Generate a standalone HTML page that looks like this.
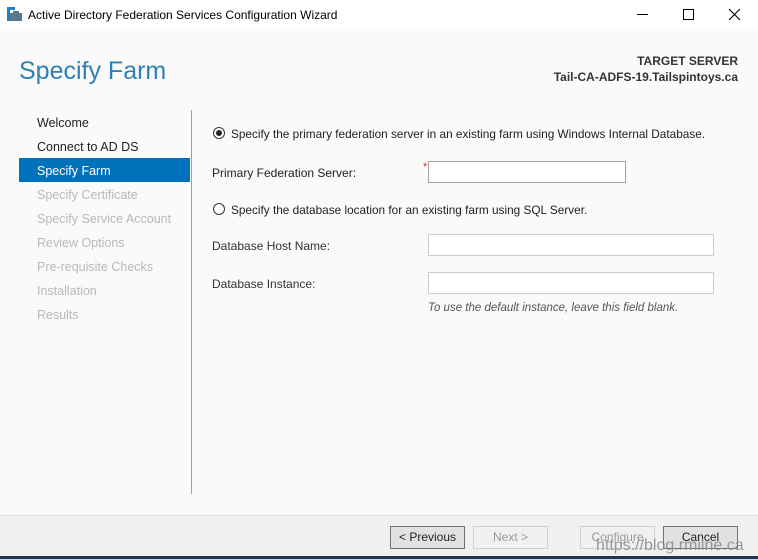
<!DOCTYPE html>
<html><head><style>
*{margin:0;padding:0;box-sizing:border-box}
body{width:758px;height:559px;background:#fafafa;font-family:"Liberation Sans",sans-serif;font-size:12px;color:#1e1e1e;position:relative;overflow:hidden}
.a{position:absolute;white-space:nowrap}
.tb{position:absolute;left:0;top:0;width:758px;height:29px;background:#fff}
.inp{position:absolute;height:22px;background:#fff;border:1px solid #a0a0a0}
.btn{position:absolute;top:526px;width:75px;height:23px;border:1px solid #adadad;background:#e1e1e1;text-align:center;line-height:21px;font-size:12px}
.dis{border-color:#cfcfcf;background:#f0f0f0;color:#9a9a9a}
.nav{position:absolute;left:37px;font-size:12.5px}
.g{color:#b8b8b8}
.r{position:absolute;width:12px;height:12px;border:1px solid #333;border-radius:50%;background:#fff}
</style></head><body>
<div class="tb"></div>
<svg class="a" style="left:7px;top:7px" width="16" height="15"><rect x="0" y="0" width="3" height="14" fill="#1a7fd0"/><rect x="0" y="0" width="8" height="3" fill="#1a7fd0"/><rect x="3" y="6" width="12" height="8" fill="#5a7790"/><rect x="6" y="4" width="6" height="2" fill="#5a7790"/></svg>
<div class="a" style="left:28px;top:8px;font-size:12px;color:#000">Active Directory Federation Services Configuration Wizard</div>
<div class="a" style="left:637px;top:14px;width:11px;height:1px;background:#000"></div>
<div class="a" style="left:683px;top:9px;width:11px;height:11px;border:1px solid #000"></div>
<svg class="a" style="left:728px;top:8px" width="13" height="13"><path d="M1 1L12 12M12 1L1 12" stroke="#000" stroke-width="1.1"/></svg>
<div class="a" style="left:19px;top:57px;font-size:25px;color:#2f7fb5">Specify Farm</div>
<div class="a" style="right:20px;top:54px;font-size:12px;font-weight:bold;color:#333">TARGET SERVER</div>
<div class="a" style="right:20px;top:70px;font-size:12px;font-weight:bold;color:#333">Tail-CA-ADFS-19.Tailspintoys.ca</div>
<div class="nav a" style="top:116px">Welcome</div>
<div class="nav a" style="top:140px">Connect to AD DS</div>
<div class="a" style="left:19px;top:158px;width:171px;height:24px;background:#0072bc"></div>
<div class="nav a" style="top:164px;color:#fff">Specify Farm</div>
<div class="nav a g" style="top:188px">Specify Certificate</div>
<div class="nav a g" style="top:212px">Specify Service Account</div>
<div class="nav a g" style="top:236px">Review Options</div>
<div class="nav a g" style="top:260px">Pre-requisite Checks</div>
<div class="nav a g" style="top:284px">Installation</div>
<div class="nav a g" style="top:308px">Results</div>
<div class="a" style="left:191px;top:110px;width:1px;height:384px;background:#a0a0a0"></div>
<div class="r" style="left:213px;top:127px"><div style="position:absolute;left:2px;top:2px;width:6px;height:6px;border-radius:50%;background:#222"></div></div>
<div class="a" style="left:231px;top:127px;font-size:11.8px">Specify the primary federation server in an existing farm using Windows Internal Database.</div>
<div class="a" style="left:212px;top:166px">Primary Federation Server:</div>
<div class="a" style="left:423px;top:161px;color:#e02020;font-size:11px">*</div>
<div class="inp" style="left:428px;top:161px;width:198px"></div>
<div class="r" style="left:213px;top:203px"></div>
<div class="a" style="left:231px;top:203px;font-size:11.8px">Specify the database location for an existing farm using SQL Server.</div>
<div class="a" style="left:212px;top:239px;color:#333">Database Host Name:</div>
<div class="inp" style="left:428px;top:234px;width:286px;border-color:#ccc"></div>
<div class="a" style="left:212px;top:277px;color:#333">Database Instance:</div>
<div class="inp" style="left:428px;top:272px;width:286px;border-color:#ccc"></div>
<div class="a" style="left:428px;top:302px;font-style:italic;color:#555;font-size:11.5px">To use the default instance, leave this field blank.</div>
<div class="a" style="left:0;top:515px;width:758px;height:41px;background:#f0f0f0;border-top:1px solid #dcdcdc"></div>
<div class="a" style="left:0;top:556px;width:758px;height:3px;background:#1f3550"></div>
<div class="btn" style="left:390px;border-color:#707070">&lt; Previous</div>
<div class="btn dis" style="left:473px">Next &gt;</div>
<div class="btn dis" style="left:580px">Configure</div>
<div class="btn" style="left:663px;border-color:#707070">Cancel</div>
<div class="a" style="left:596px;top:537px;font-size:16px;color:#888;opacity:.85">https://blog.rmilne.ca</div>
</body></html>
